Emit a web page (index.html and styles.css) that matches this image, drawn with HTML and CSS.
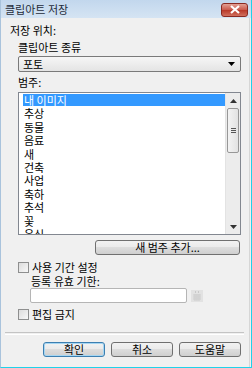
FILE: index.html
```html
<!DOCTYPE html>
<html>
    <head>
        <meta charset="utf-8">
        <title>클립아트 저장</title>
        <link rel="stylesheet" href="styles.css">
    </head>
    <body>
        <div class="window">
            <div class="titlebar">
                <div class="title">클립아트 저장</div>
                <div class="close">
                    <svg width="12" height="9" viewBox="0 0 12 9"><path d="M2 1 L10 8 M10 1 L2 8" stroke="#fff" stroke-width="2.2"/></svg>
                </div>
            </div>
            <div class="body">
                <div class="label first">저장 위치:</div>
                <div class="label indent">클립아트 종류</div>
                <div class="select">
                    <span>포토</span>
                    <svg width="7" height="4" viewBox="0 0 7 4"><path d="M0 0 H7 L3.5 4 Z" fill="#000"/></svg>
                </div>
                <div class="label indent">범주:</div>
                <div class="listbox">
                    <div class="items">
                        <div class="item selected">내 이미지</div>
                        <div class="item">추상</div>
                        <div class="item">동물</div>
                        <div class="item">음료</div>
                        <div class="item">새</div>
                        <div class="item">건축</div>
                        <div class="item">사업</div>
                        <div class="item">축하</div>
                        <div class="item">추석</div>
                        <div class="item">꽃</div>
                        <div class="item">음식</div>
                    </div>
                    <div class="scrollbar">
                        <div class="arrow">
                            <svg width="7" height="4" viewBox="0 0 7 4"><path d="M0 4 H7 L3.5 0 Z" fill="#333"/></svg>
                        </div>
                        <div class="thumb"><span></span><span></span><span></span></div>
                        <div class="track"></div>
                        <div class="arrow">
                            <svg width="7" height="4" viewBox="0 0 7 4"><path d="M0 0 H7 L3.5 4 Z" fill="#333"/></svg>
                        </div>
                    </div>
                </div>
                <div class="newcat">
                    <div class="button wide">새 범주 추가...</div>
                </div>
                <div class="check first-check"><span class="box"></span>사용 기간 설정</div>
                <div class="label indent2">등록 유효 기한:</div>
                <div class="date-row">
                    <div class="textbox"></div>
                    <div class="calendar">
                        <svg width="12" height="12" viewBox="0 0 12 12">
                            <rect x="0" y="0" width="12" height="12" fill="#e2e2e2"/>
                            <rect x="4" y="1" width="1" height="2" fill="#c8c8c8"/>
                            <rect x="7" y="1" width="1" height="2" fill="#c8c8c8"/>
                            <path d="M2 5 H10 M2 7 H10 M2 9 H10 M4 4 V11 M6 4 V11 M8 4 V11" stroke="#cdcdcd" stroke-width="1"/>
                        </svg>
                    </div>
                </div>
                <div class="check last-check"><span class="box"></span>편집 금지</div>
                <div class="separator"></div>
                <div class="buttons">
                    <div class="button default">확인</div>
                    <div class="button">취소</div>
                    <div class="button">도움말</div>
                </div>
            </div>
        </div>
    </body>
</html>
```

FILE: styles.css
```css
body {
    margin: 0px;
    font-family: "Noto Sans CJK KR", "Noto Sans", sans-serif;
    font-size: 11px;
    color: #000;
}
.window {
    width: 252px;
    height: 368px;
    box-sizing: border-box;
    background: #f0f0f0;
    border-left: 1px solid #a9c3dc;
    border-right: 1px solid #1fd2ea;
    border-bottom: 1px solid #1fd2ea;
    display: flex;
    flex-direction: column;
}
.titlebar {
    height: 18px;
    background: linear-gradient(to bottom, #c2d7ed, #d5e4f3);
    display: flex;
    align-items: center;
    justify-content: space-between;
    padding: 0 3px 0 4px;
}
.title {
    font-size: 11px;
    line-height: 13px;
    color: #1e2b3a;
}
.close {
    width: 25px;
    height: 12px;
    margin-top: 1px;
    border: 1px solid #8a2a22;
    border-radius: 3px;
    background: linear-gradient(to bottom, #e3a094, #c9584a 50%, #b83828 51%, #d0705e);
    display: flex;
    align-items: center;
    justify-content: center;
}
.body {
    flex: 1;
    border-right: 1px solid #d6d6d6;
    margin-right: 1px;
    display: flex;
    flex-direction: column;
}
.label {
    height: 13px;
    line-height: 13px;
    margin-left: 17px;
    margin-top: 4px;
}
.label.first {
    margin-left: 9px;
    margin-top: 6px;
}
.label.indent2 {
    margin-left: 30px;
    margin-top: 1px;
}
.select {
    margin: 2px 8px 0 17px;
    height: 16px;
    box-sizing: border-box;
    border: 1px solid #7a7a7a;
    border-radius: 2px;
    background: linear-gradient(to bottom, #f6f6f6, #e4e4e4);
    display: flex;
    align-items: center;
    justify-content: space-between;
    padding: 0 5px 0 4px;
    line-height: 13px;
}
.listbox {
    margin: 3px 8px 0 17px;
    height: 143px;
    box-sizing: border-box;
    border: 1px solid #828790;
    background: #fff;
    display: flex;
    overflow: hidden;
}
.items {
    flex: 1;
    padding: 1px 0 0 4px;
}
.item {
    height: 13.4px;
    line-height: 13px;
    padding-left: 1px;
}
.item.selected {
    height: 12px;
    line-height: 12px;
    margin-bottom: 1.4px;
    background: #3399ff;
    color: #fff;
}
.scrollbar {
    width: 14px;
    background: #ececec;
    border-left: 1px solid #e3e3e3;
    display: flex;
    flex-direction: column;
}
.arrow {
    height: 15px;
    display: flex;
    align-items: center;
    justify-content: center;
}
.thumb {
    height: 45px;
    margin: 0 1px;
    box-sizing: border-box;
    border: 1px solid #979797;
    border-radius: 2px;
    background: linear-gradient(to right, #f3f3f3, #e2e2e2);
    display: flex;
    flex-direction: column;
    align-items: center;
    justify-content: center;
    gap: 1px;
}
.thumb span {
    width: 5px;
    height: 1px;
    background: #555;
}
.track {
    flex: 1;
}
.newcat {
    display: flex;
    justify-content: flex-end;
    margin: 5px 9px 0 0;
}
.button {
    height: 15px;
    box-sizing: border-box;
    border: 1px solid #707070;
    border-radius: 3px;
    background: linear-gradient(to bottom, #f2f2f2, #ebebeb 45%, #dddddd 50%, #cfcfcf);
    text-align: center;
    line-height: 13px;
    width: 62px;
}
.button.wide {
    width: 145px;
}
.button.default {
    border-color: #3c7fb1;
    box-shadow: inset 0 0 0 1px #a6d6f2;
}
.check {
    display: flex;
    align-items: center;
    height: 13px;
    line-height: 13px;
    margin-left: 17px;
}
.check .box {
    width: 9px;
    height: 9px;
    border: 1px solid #8e8f8f;
    background: linear-gradient(135deg, #dcdcdc, #f8f8f8);
    margin-right: 3px;
}
.check.first-check {
    margin-top: 6px;
}
.check.last-check {
    margin-top: 5px;
}
.date-row {
    display: flex;
    align-items: center;
    margin: 0 0 0 29px;
    gap: 4px;
}
.textbox {
    width: 157px;
    height: 15px;
    box-sizing: border-box;
    border: 1px solid #b5b5b5;
    border-radius: 2px;
    background: #fff;
}
.calendar {
    display: flex;
}
.separator {
    height: 1px;
    margin: 11px 5px 0 4px;
    border-top: 1px solid #c4c4c4;
    border-bottom: 1px solid #fff;
}
.buttons {
    display: flex;
    justify-content: flex-end;
    gap: 6px;
    margin: 7px 8px 0 0;
}
```
